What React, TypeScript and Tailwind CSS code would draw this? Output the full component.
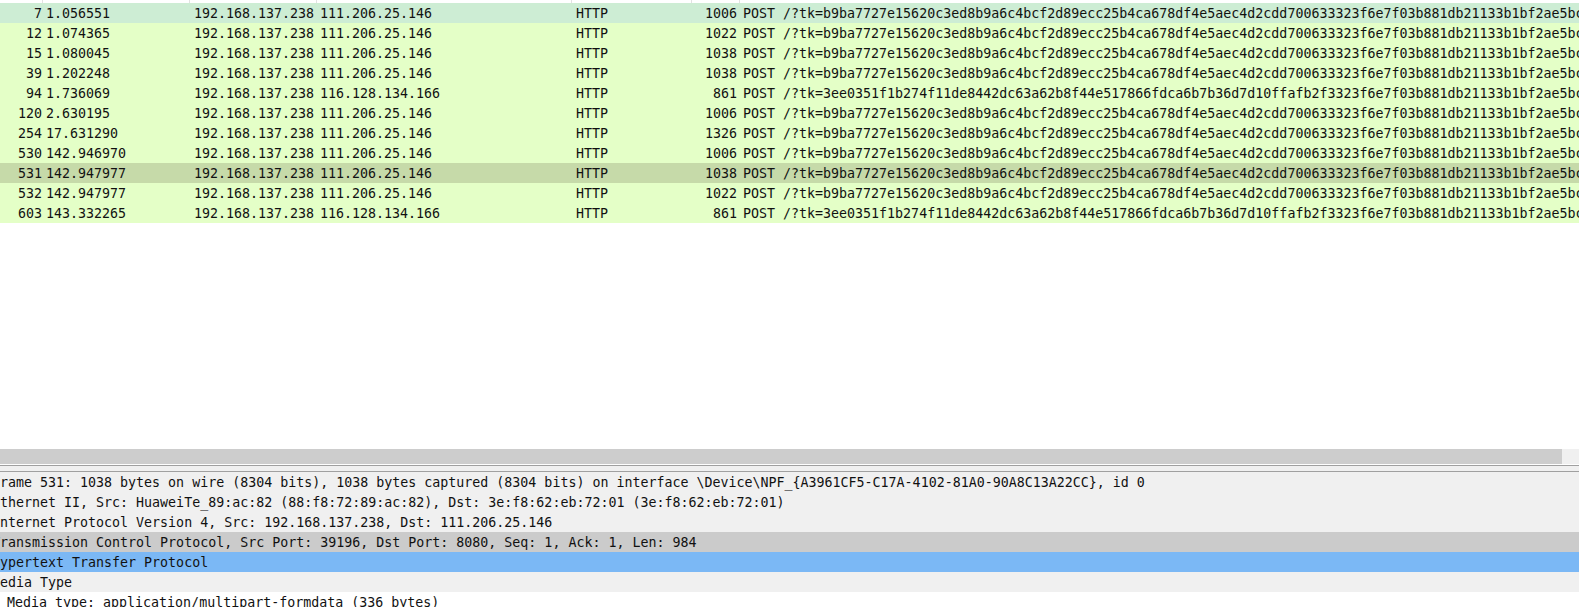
import React from 'react';

const A = 'b9ba7727e15620c3ed8b9a6c4bcf2d89ecc25b4ca678df4e5aec4d2cdd700633323f6e7f03b881db21133b1bf2ae5bc0a1f3d9e82b7';
const B = '3ee0351f1b274f11de8442dc63a62b8f44e517866fdca6b7b36d7d10ffafb2f3323f6e7f03b881db21133b1bf2ae5bc0a1f3d9e82b7';

interface Packet {
    no: number;
    time: string;
    dst: string;
    len: number;
    tk: string;
    bg: string;
}

const packets: Packet[] = [
    { no: 7, time: '1.056551', dst: '111.206.25.146', len: 1006, tk: A, bg: 'bg-[#cdedd4]' },
    { no: 12, time: '1.074365', dst: '111.206.25.146', len: 1022, tk: A, bg: 'bg-[#e4ffc7]' },
    { no: 15, time: '1.080045', dst: '111.206.25.146', len: 1038, tk: A, bg: 'bg-[#e4ffc7]' },
    { no: 39, time: '1.202248', dst: '111.206.25.146', len: 1038, tk: A, bg: 'bg-[#e4ffc7]' },
    { no: 94, time: '1.736069', dst: '116.128.134.166', len: 861, tk: B, bg: 'bg-[#e4ffc7]' },
    { no: 120, time: '2.630195', dst: '111.206.25.146', len: 1006, tk: A, bg: 'bg-[#e4ffc7]' },
    { no: 254, time: '17.631290', dst: '111.206.25.146', len: 1326, tk: A, bg: 'bg-[#e4ffc7]' },
    { no: 530, time: '142.946970', dst: '111.206.25.146', len: 1006, tk: A, bg: 'bg-[#e4ffc7]' },
    { no: 531, time: '142.947977', dst: '111.206.25.146', len: 1038, tk: A, bg: 'bg-[#c6daa9]' },
    { no: 532, time: '142.947977', dst: '111.206.25.146', len: 1022, tk: A, bg: 'bg-[#e4ffc7]' },
    { no: 603, time: '143.332265', dst: '116.128.134.166', len: 861, tk: B, bg: 'bg-[#e4ffc7]' },
];

const details = [
    { text: 'Frame 531: 1038 bytes on wire (8304 bits), 1038 bytes captured (8304 bits) on interface \\Device\\NPF_{A3961CF5-C17A-4102-81A0-90A8C13A22CC}, id 0', bg: 'bg-[#f0f0f0]', indent: 'ml-[-8px]' },
    { text: 'Ethernet II, Src: HuaweiTe_89:ac:82 (88:f8:72:89:ac:82), Dst: 3e:f8:62:eb:72:01 (3e:f8:62:eb:72:01)', bg: 'bg-[#f0f0f0]', indent: 'ml-[-8px]' },
    { text: 'Internet Protocol Version 4, Src: 192.168.137.238, Dst: 111.206.25.146', bg: 'bg-[#f0f0f0]', indent: 'ml-[-8px]' },
    { text: 'Transmission Control Protocol, Src Port: 39196, Dst Port: 8080, Seq: 1, Ack: 1, Len: 984', bg: 'bg-[#cbcbcb]', indent: 'ml-[-8px]' },
    { text: 'Hypertext Transfer Protocol', bg: 'bg-[#7bb8f5]', indent: 'ml-[-8px]' },
    { text: 'Media Type', bg: 'bg-[#f0f0f0]', indent: 'ml-[-8px]' },
    { text: 'Media type: application/multipart-formdata (336 bytes)', bg: 'bg-white', indent: 'ml-[7px]' },
];

export default function App() {
    return (
        <div className="w-[1579px] h-[607px] overflow-hidden bg-white text-[#111] font-['DejaVu_Sans_Mono',monospace] text-[13.3px] leading-[20px] flex flex-col">
            {/* header remnant */}
            <div className="h-[3px] flex flex-shrink-0">
                <div className="w-[43px] border-r border-[#e2e2e2]" />
                <div className="w-[147px] border-r border-[#e2e2e2]" />
                <div className="w-[127px] border-r border-[#e2e2e2]" />
                <div className="w-[255px] border-r border-[#e2e2e2]" />
                <div className="w-[120px] border-r border-[#e2e2e2]" />
                <div className="w-[48px] border-r border-[#e2e2e2]" />
            </div>

            <div className="flex flex-col flex-shrink-0">
                {packets.map((p) => (
                    <div key={p.no} className={`flex h-[20px] pt-[1px] whitespace-nowrap ${p.bg}`}>
                        <div className="w-[43px] text-right pr-[1px] flex-shrink-0">{p.no}</div>
                        <div className="w-[147px] pl-[3px] flex-shrink-0">{p.time}</div>
                        <div className="w-[127px] pl-[4px] flex-shrink-0">192.168.137.238</div>
                        <div className="w-[255px] pl-[3px] flex-shrink-0">{p.dst}</div>
                        <div className="w-[120px] pl-[4px] flex-shrink-0">HTTP</div>
                        <div className="w-[48px] text-right pr-[3px] flex-shrink-0">{p.len}</div>
                        <div className="flex-1 min-w-0 overflow-hidden pl-[3px]">POST /?tk={p.tk}</div>
                    </div>
                ))}
            </div>

            <div className="h-[226px] flex-shrink-0" />

            {/* horizontal scrollbar */}
            <div className="h-[15px] flex flex-shrink-0">
                <div className="w-[1562px] bg-[#cdcdcd]" />
                <div className="flex-1 bg-[#f0f0f0]" />
            </div>
            <div className="h-[1px] flex-shrink-0 bg-white" />
            <div className="h-[1px] flex-shrink-0 bg-[#a0a0a0]" />
            <div className="h-[5px] flex-shrink-0 bg-[#f0f0f0]" />
            <div className="h-[1px] flex-shrink-0 bg-[#a0a0a0]" />

            <div className="flex flex-col flex-shrink-0">
                {details.map((d, i) => (
                    <div key={i} className={`h-[20px] pt-[1px] whitespace-nowrap overflow-hidden ${d.bg}`}>
                        <span className={`inline-block ${d.indent}`}>{d.text}</span>
                    </div>
                ))}
            </div>
        </div>
    );
}
